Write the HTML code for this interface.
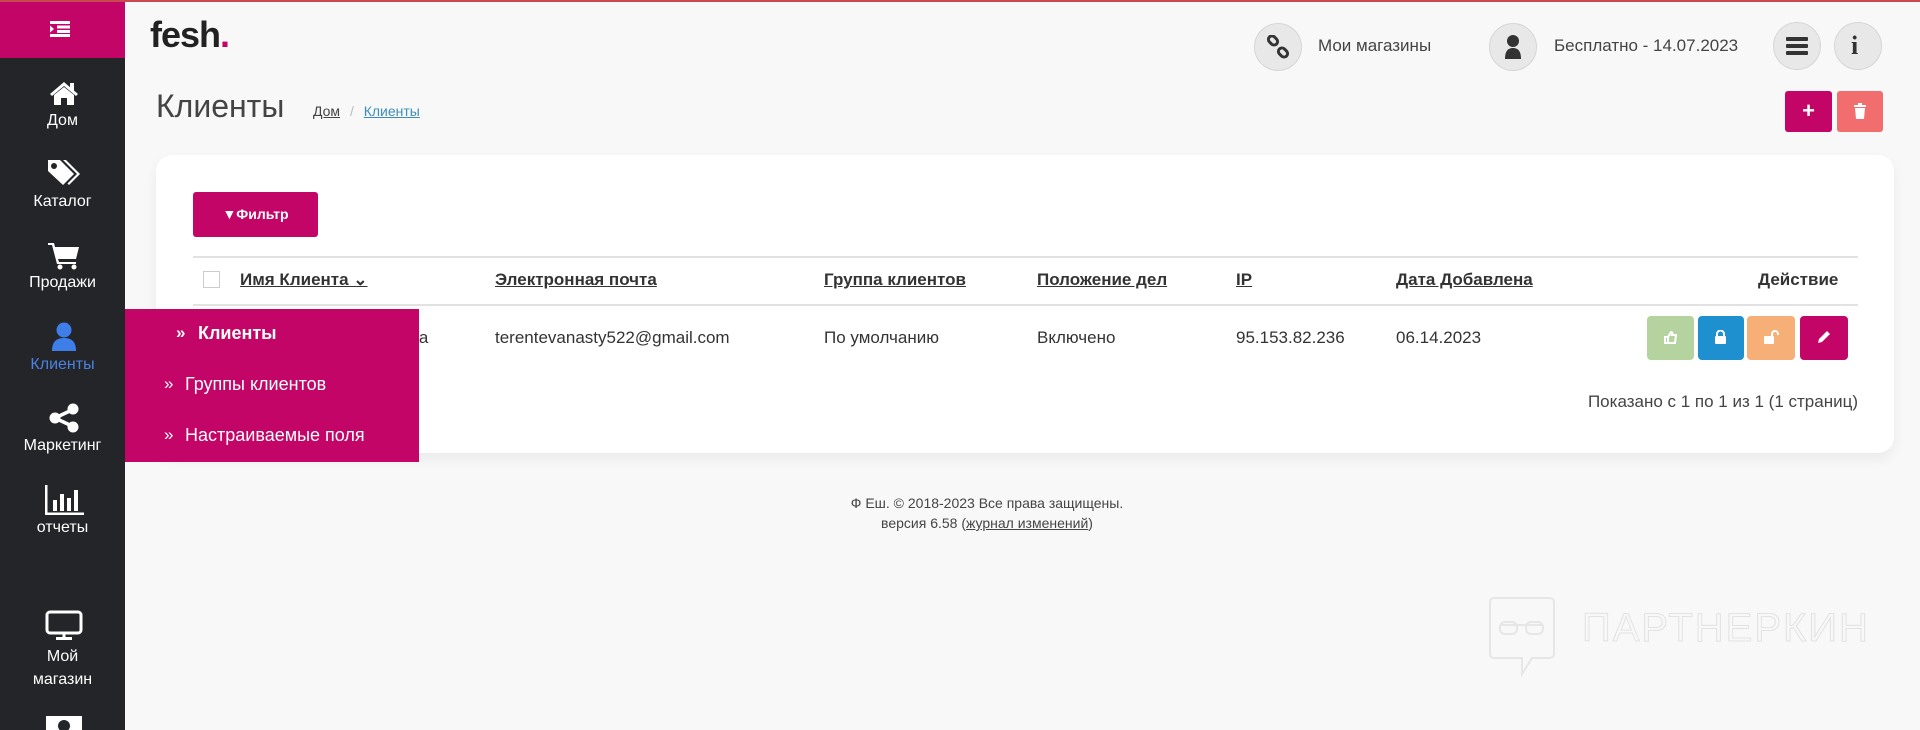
<!DOCTYPE html>
<html><head><meta charset="utf-8"><style>
*{box-sizing:border-box;margin:0;padding:0}
body{width:1920px;height:728px;overflow:hidden;background:#f8f8f8;font-family:"Liberation Sans",sans-serif;color:#333;position:relative;border-top:2px solid #c8494f}
.abs{position:absolute}
.side{position:absolute;left:0;top:0;width:125px;height:728px;background:#232529}
.sidetop{position:absolute;left:0;top:0;width:125px;height:56px;background:#c20566}
.si{position:absolute;left:0;width:125px;text-align:center;color:#fff;font-size:16px}
.fly{position:absolute;left:125px;top:307px;width:294px;height:153px;background:#c20566;color:#fff;font-size:18px;z-index:10}
.fly div{position:absolute;white-space:nowrap}
.circ{position:absolute;width:48px;height:48px;border-radius:50%;background:#e8e8e8;border:1px solid #d6d6d6}
.card{position:absolute;left:156px;top:153px;width:1738px;height:298px;background:#fff;border-radius:16px;box-shadow:0 6px 14px rgba(0,0,0,.06)}
.th{position:absolute;top:268px;font-weight:bold;font-size:17px;text-decoration:underline;color:#333}
.td{position:absolute;top:326px;font-size:17px;color:#333}
.ab{position:absolute;top:314px;height:44px;border-radius:4px}
</style></head><body>
<div class="side"></div>
<div class="sidetop"></div>
<svg class="abs" style="left:50px;top:19px" width="20" height="16" viewBox="0 0 20 16" fill="#fff"><rect x="0" y="0" width="20" height="3"/><rect x="7" y="4.5" width="13" height="3"/><rect x="7" y="9" width="13" height="3"/><rect x="0" y="13" width="20" height="3"/><path d="M0 4.5l4 3.5-4 3.5z"/></svg>
<svg class="abs" style="left:49px;top:78px" width="30" height="26" viewBox="0 0 30 26" fill="#fff"><path d="M15 2L1 14l2 2 12-10 12 10 2-2-4-3.4V3h-4v4.2z"/><path d="M5 15v10h7v-7h6v7h7V15L15 7z"/></svg>
<div class="si" style="top:110px">Дом</div>
<svg class="abs" style="left:46px;top:156px" width="36" height="30" viewBox="0 0 36 30" fill="#fff"><path d="M2 2h12l14 14-11 11L2 13z"/><circle cx="8" cy="8" r="3" fill="#232529"/><path d="M17 2h3l14 14-11 11-1.5-1.5 9.5-9.5z"/></svg>
<div class="si" style="top:191px">Каталог</div>
<svg class="abs" style="left:48px;top:240px" width="32" height="28" viewBox="0 0 32 28" fill="#fff"><path d="M0 1h6l1 4h24l-3 12H10l1 3h17v2H9L4 3H0z"/><circle cx="12" cy="25" r="2.5"/><circle cx="26" cy="25" r="2.5"/></svg>
<div class="si" style="top:272px">Продажи</div>
<svg class="abs" style="left:51px;top:320px" width="26" height="30" viewBox="0 0 26 30" fill="#3d7ee8"><circle cx="13" cy="8" r="7.5"/><path d="M1 29c0-9 4-13 12-13s12 4 12 13z"/></svg>
<div class="si" style="top:354px;color:#4a82e0">Клиенты</div>
<svg class="abs" style="left:48px;top:401px" width="32" height="30" viewBox="0 0 32 30" fill="#fff"><circle cx="25" cy="6" r="5.5"/><circle cx="7" cy="15" r="5.5"/><circle cx="25" cy="24" r="5.5"/><path d="M7 13l17-8 2 3L9 16zM9 14l17 8-2 3L7 17z"/></svg>
<div class="si" style="top:435px">Маркетинг</div>
<svg class="abs" style="left:45px;top:483px" width="40" height="30" viewBox="0 0 40 30" fill="#fff"><rect x="0" y="0" width="2.5" height="30"/><rect x="0" y="27.5" width="39" height="2.5"/><rect x="8" y="15" width="4" height="11"/><rect x="15" y="9" width="4" height="17"/><rect x="22" y="13" width="4" height="13"/><rect x="29" y="5" width="4" height="21"/></svg>
<div class="si" style="top:517px">отчеты</div>
<svg class="abs" style="left:45px;top:608px" width="38" height="30" viewBox="0 0 38 30" fill="none" stroke="#fff" stroke-width="3"><rect x="2" y="2" width="34" height="21" rx="3"/><path d="M19 23v5M11 28.5h16"/></svg>
<div class="si" style="top:643px;line-height:23px">Мой<br>магазин</div>
<svg class="abs" style="left:46px;top:714px" width="36" height="14" viewBox="0 0 36 14" fill="#fff"><rect x="0" y="0" width="36" height="14"/><circle cx="18" cy="10" r="6" fill="#232529"/></svg>
<div class="fly">
<div style="left:51px;top:14px;font-weight:bold;font-size:17px">»</div>
<div style="left:73px;top:14px;font-weight:bold">Клиенты</div>
<div style="left:39px;top:65px;font-size:17px">»</div>
<div style="left:60px;top:65px">Группы клиентов</div>
<div style="left:39px;top:116px;font-size:17px">»</div>
<div style="left:60px;top:116px">Настраиваемые поля</div>
</div>
<div class="abs" style="left:150px;top:12px;font-size:36px;font-weight:bold;color:#222;letter-spacing:-1px">fesh<span style="color:#c20566">.</span></div>
<div class="abs" style="left:156px;top:86px;font-size:32px;color:#444">Клиенты</div>
<div class="abs" style="left:313px;top:101px;font-size:14px;color:#444"><u>Дом</u> <span style="color:#bbb;margin:0 6px">/</span> <u style="color:#3c8dbc">Клиенты</u></div>
<div class="circ" style="left:1254px;top:21px"></div>
<svg class="abs" style="left:1266px;top:33px" width="24" height="24" viewBox="0 0 24 24" fill="none" stroke="#333" stroke-width="3"><rect x="2" y="2" width="10" height="7" rx="3.5" transform="rotate(45 7 5.5)"/><rect x="12" y="14" width="10" height="7" rx="3.5" transform="rotate(45 17 17.5)"/></svg>
<div class="abs" style="left:1318px;top:34px;font-size:17px;color:#444">Мои магазины</div>
<div class="circ" style="left:1489px;top:21px"></div>
<svg class="abs" style="left:1504px;top:32px" width="18" height="26" viewBox="0 0 18 26" fill="#333"><circle cx="9" cy="7" r="6"/><path d="M1 25c0-8 3-11 8-11s8 3 8 11z"/></svg>
<div class="abs" style="left:1554px;top:34px;font-size:17px;color:#444">Бесплатно - 14.07.2023</div>
<div class="circ" style="left:1773px;top:20px"></div>
<svg class="abs" style="left:1786px;top:34px" width="22" height="20" viewBox="0 0 22 20" fill="#333"><rect y="1" width="22" height="4" rx="1"/><rect y="8" width="22" height="4" rx="1"/><rect y="15" width="22" height="4" rx="1"/></svg>
<div class="circ" style="left:1834px;top:20px"></div>
<div class="abs" style="left:1851px;top:29px;font-size:26px;font-weight:bold;font-family:'Liberation Serif',serif;color:#333">i</div>
<div class="abs" style="left:1785px;top:89px;width:47px;height:41px;background:#c20566;border-radius:3px;color:#fff;text-align:center;font-size:22px;font-weight:bold;line-height:40px">+</div>
<div class="abs" style="left:1837px;top:89px;width:46px;height:41px;background:#f26d6d;border-radius:3px"></div>
<svg class="abs" style="left:1854px;top:101px" width="12" height="16" viewBox="0 0 12 16" fill="#fff"><rect x="0" y="2" width="12" height="2"/><rect x="4" y="0" width="4" height="2"/><path d="M1 5h10l-1 11H2z"/></svg>
<div class="card"></div>
<div class="abs" style="left:193px;top:190px;width:125px;height:45px;background:#c20566;border-radius:3px;color:#fff;font-size:14px;font-weight:bold;text-align:center;line-height:45px">▼Фильтр</div>
<div class="abs" style="left:193px;top:254px;width:1665px;height:2px;background:#e2e2e2"></div>
<div class="abs" style="left:193px;top:302px;width:1665px;height:2px;background:#e2e2e2"></div>
<div class="abs" style="left:203px;top:269px;width:17px;height:17px;border:1px solid #ccc;background:#fff"></div>
<div class="th" style="left:240px">Имя Клиента ⌄</div>
<div class="th" style="left:495px">Электронная почта</div>
<div class="th" style="left:824px">Группа клиентов</div>
<div class="th" style="left:1037px">Положение дел</div>
<div class="th" style="left:1236px">IP</div>
<div class="th" style="left:1396px">Дата Добавлена</div>
<div class="th" style="left:1758px;text-decoration:none">Действие</div>
<div class="td" style="left:410px">ва</div>
<div class="td" style="left:495px">terentevanasty522@gmail.com</div>
<div class="td" style="left:824px">По умолчанию</div>
<div class="td" style="left:1037px">Включено</div>
<div class="td" style="left:1236px">95.153.82.236</div>
<div class="td" style="left:1396px">06.14.2023</div>
<div class="ab" style="left:1647px;width:47px;background:#b5d39f"></div>
<div class="ab" style="left:1698px;width:46px;background:#1e90d0"></div>
<div class="ab" style="left:1747px;width:48px;background:#f6af77"></div>
<div class="ab" style="left:1800px;width:48px;background:#c20566"></div>
<svg class="abs" style="left:1664px;top:329px" width="13" height="13" viewBox="0 0 13 13" fill="none" stroke="#fff" stroke-width="2"><path d="M1 6h3v6H1zM4 6l3-5c1 0 2 1 1 3h4l-1 8H4"/></svg>
<svg class="abs" style="left:1714px;top:328px" width="13" height="14" viewBox="0 0 13 14" fill="#fff"><path d="M3 6V4a3.5 3.5 0 0 1 7 0v2" stroke="#fff" stroke-width="2" fill="none"/><rect x="1" y="6" width="11" height="8" rx="1"/></svg>
<svg class="abs" style="left:1764px;top:328px" width="15" height="14" viewBox="0 0 15 14" fill="#fff"><path d="M8 6V4a3 3 0 0 1 6 0v1" stroke="#fff" stroke-width="2" fill="none"/><rect x="0" y="6" width="10" height="8" rx="1"/></svg>
<svg class="abs" style="left:1817px;top:328px" width="14" height="14" viewBox="0 0 14 14" fill="#fff"><path d="M10 1l3 3-8 8-4 1 1-4z"/></svg>
<div class="abs" style="left:1500px;top:390px;font-size:17px;color:#444;text-align:right;width:358px">Показано с 1 по 1 из 1 (1 страниц)</div>
<div class="abs" style="left:687px;top:491px;width:600px;text-align:center;font-size:14px;color:#444;line-height:20px">Ф Еш. © 2018-2023 Все права защищены.<br>версия 6.58 (<u>журнал изменений</u>)</div>
<svg class="abs" style="left:1488px;top:594px" width="70" height="82" viewBox="0 0 70 82" fill="none" stroke="#e6e6e6" stroke-width="2"><path d="M6 2h56a4 4 0 0 1 4 4v52a4 4 0 0 1-4 4H44L34 78V62H6a4 4 0 0 1-4-4V6a4 4 0 0 1 4-4z"/><rect x="12" y="26" width="17" height="12" rx="5"/><rect x="38" y="26" width="17" height="12" rx="5"/><path d="M12 29h43"/></svg>
<div class="abs" style="left:1582px;top:604px;font-size:40px;color:transparent;-webkit-text-stroke:1px #e2e2e2;letter-spacing:2px">ПАРТНЕРКИН</div>
</body></html>
